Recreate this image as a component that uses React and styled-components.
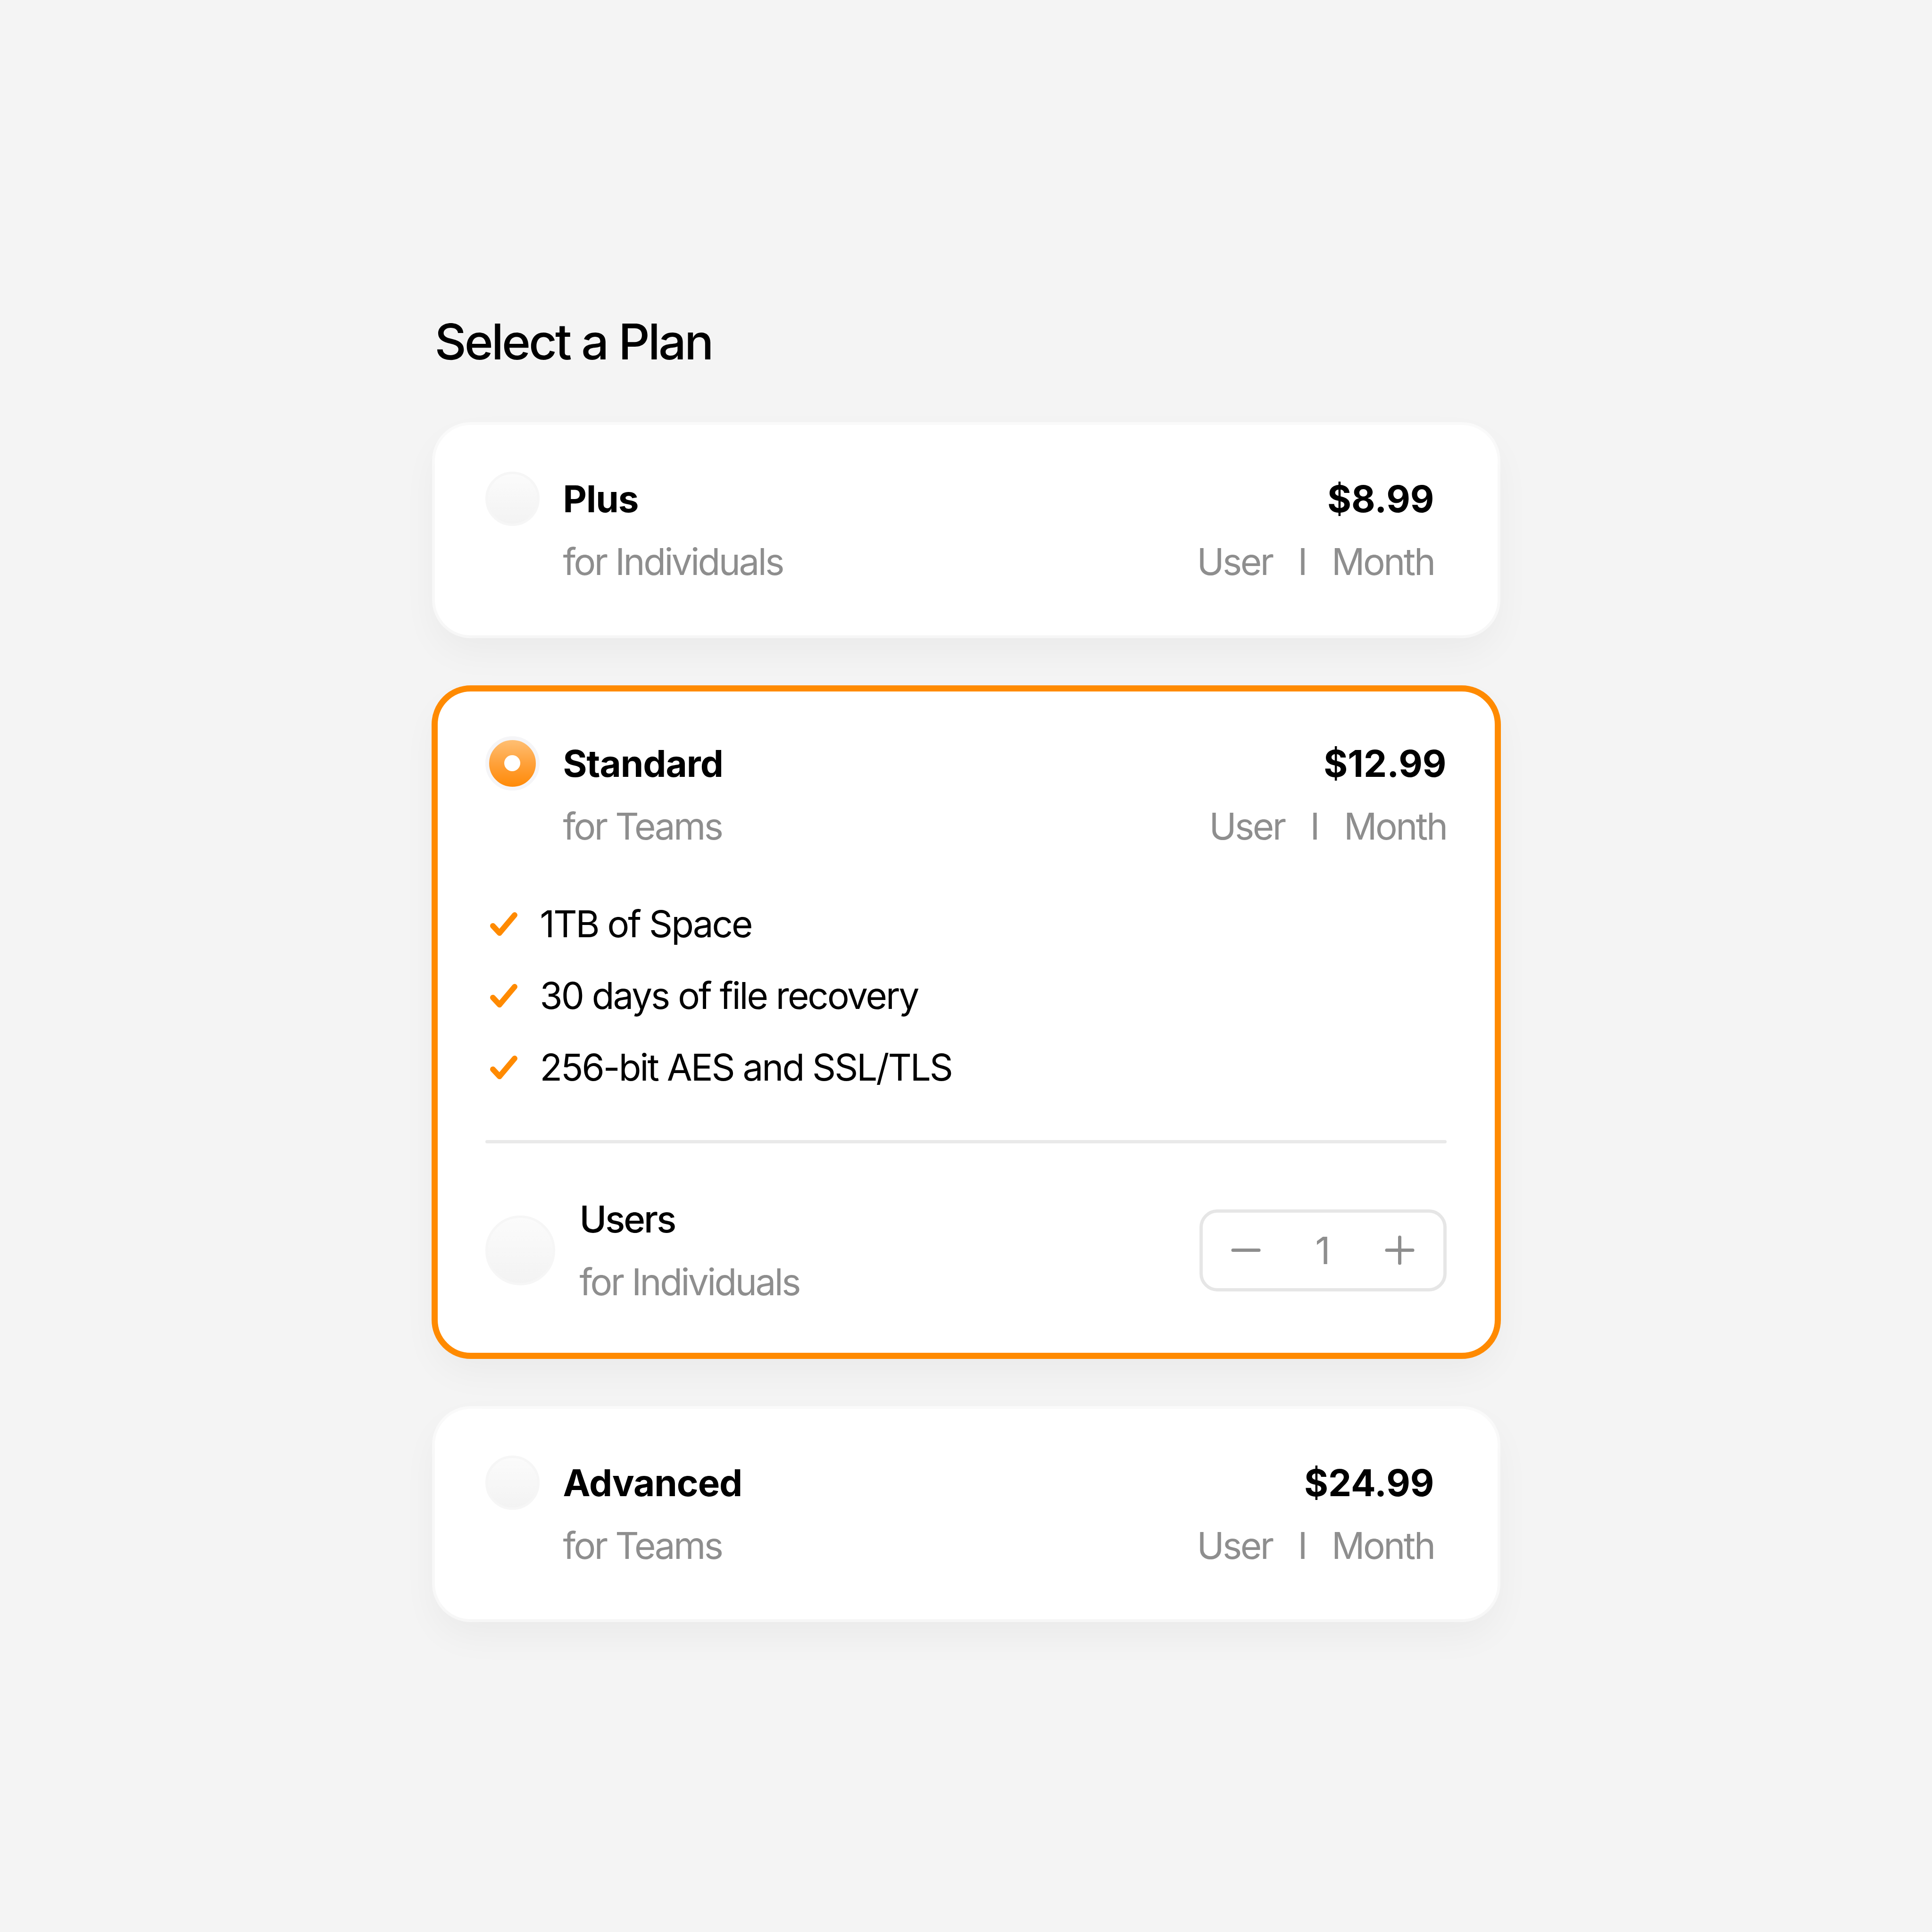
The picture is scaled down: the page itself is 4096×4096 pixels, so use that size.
import React, { useState } from "react";
import styled, { createGlobalStyle, css } from "styled-components";

const GlobalStyle = createGlobalStyle`
  html, body {
    margin: 0;
    padding: 0;
    background: #f4f4f4;
  }
  body {
    font-family: Inter, "Noto Sans", "Liberation Sans", sans-serif;
    color: #000;
  }
`;

const Page = styled.main`
  min-height: 4096px;
  box-sizing: border-box;
  padding-top: 662px;
`;

const Wrap = styled.section`
  width: 2253px;
  margin: 0 auto;
`;

const Title = styled.h1`
  margin: 0 0 114px;
  font-size: 104px;
  line-height: 1.2;
  font-weight: 500;
  letter-spacing: -4px;
`;

const Stack = styled.div`
  display: flex;
  flex-direction: column;
  gap: 113px;
`;

const Card = styled.div`
  box-sizing: border-box;
  width: 100%;
  background: #fff;
  border-radius: 76px;
  padding: ${(p) => (p.$selected ? "92px 108px 90px 107px" : "90px 134px 90px 107px")};
  box-shadow: 0 0 0 6px rgba(255, 255, 255, 0.55), 0 34px 80px rgba(0, 0, 0, 0.045);
  cursor: pointer;
  ${(p) =>
    p.$selected &&
    css`
      outline: 13px solid #ff8a00;
      outline-offset: -6px;
    `}
`;

const Header = styled.div`
  display: grid;
  grid-template-columns: 115px 1fr auto;
  column-gap: 50px;
  line-height: 133px;
  font-size: 78px;
`;

const Radio = styled.span`
  box-sizing: border-box;
  display: block;
  width: ${(p) => p.$size}px;
  height: ${(p) => p.$size}px;
  border-radius: 50%;
  align-self: center;
  border: ${(p) => (p.$selected ? "8px solid #f5f5f7" : "5px solid #f6f6f6")};
  background: ${(p) =>
    p.$selected
      ? "linear-gradient(180deg, #ffbf73 0%, #ffa13a 50%, #ff8a08 100%)"
      : "linear-gradient(180deg, #fbfbfb 0%, #f3f3f3 100%)"};
  position: relative;
  flex: none;

  ${(p) =>
    p.$selected &&
    css`
      &::after {
        content: "";
        position: absolute;
        left: 50%;
        top: 50%;
        width: 34px;
        height: 34px;
        margin: -17px 0 0 -17px;
        border-radius: 50%;
        background: #fff;
      }
    `}
`;

const Name = styled.span`
  font-weight: 700;
  letter-spacing: -1px;
`;

const Price = styled.span`
  font-weight: 700;
  text-align: right;
`;

const Sub = styled.span`
  grid-column: 2;
  color: #8e8e8e;
  font-weight: 400;
  letter-spacing: -3.5px;
`;

const Per = styled.span`
  display: flex;
  justify-content: flex-end;
  gap: 54px;
  color: #8e8e8e;
  font-weight: 400;
  letter-spacing: -3.5px;
`;

const Features = styled.ul`
  list-style: none;
  margin: 65px 0 0;
  padding: 0;
`;

const Feature = styled.li`
  display: flex;
  align-items: center;
  gap: 46px;
  padding-left: 8px;
  height: 152px;
  font-size: 78px;
  font-weight: 400;
  letter-spacing: -3px;
`;

const Divider = styled.hr`
  border: 0;
  height: 7px;
  margin: 78px 0 0;
  background: #e9e9e9;
  border-radius: 4px;
`;

const UsersRow = styled.div`
  display: flex;
  align-items: center;
  margin-top: 94px;
`;

const UsersText = styled.div`
  display: flex;
  flex-direction: column;
  margin-left: 52px;
  flex: 1;
  font-size: 78px;
  line-height: 133px;
`;

const UsersLabel = styled.span`
  font-weight: 500;
  letter-spacing: -3px;
`;

const Stepper = styled.div`
  box-sizing: border-box;
  width: 524px;
  height: 174px;
  border: 7px solid #e6e6e6;
  border-radius: 38px;
  display: flex;
  align-items: center;
  justify-content: space-between;
  padding: 0 60px;
`;

const StepButton = styled.button`
  border: 0;
  background: none;
  padding: 0;
  width: 63px;
  height: 63px;
  display: flex;
  cursor: pointer;
  color: #8e8e8e;
`;

const Count = styled.span`
  font-size: 80px;
  font-weight: 400;
  color: #8e8e8e;
`;

const Check = () => (
  <svg width="62" height="56" viewBox="0 0 62 56" fill="none">
    <polyline
      points="8,32 22,47 54,9"
      stroke="#ff8a00"
      strokeWidth="12"
      strokeLinecap="round"
      strokeLinejoin="round"
    />
  </svg>
);

const Minus = () => (
  <svg width="63" height="63" viewBox="0 0 63 63">
    <line x1="4" y1="31.5" x2="59" y2="31.5" stroke="currentColor" strokeWidth="7" strokeLinecap="round" />
  </svg>
);

const Plus = () => (
  <svg width="63" height="63" viewBox="0 0 63 63">
    <line x1="4" y1="31.5" x2="59" y2="31.5" stroke="currentColor" strokeWidth="7" strokeLinecap="round" />
    <line x1="31.5" y1="4" x2="31.5" y2="59" stroke="currentColor" strokeWidth="7" strokeLinecap="round" />
  </svg>
);

const plans = [
  { id: "plus", name: "Plus", sub: "for Individuals", price: "$8.99" },
  {
    id: "standard",
    name: "Standard",
    sub: "for Teams",
    price: "$12.99",
    features: ["1TB of Space", "30 days of file recovery", "256-bit AES and SSL/TLS"],
  },
  { id: "advanced", name: "Advanced", sub: "for Teams", price: "$24.99" },
];

export default function App() {
  const [selected, setSelected] = useState("standard");
  const [users, setUsers] = useState(1);

  return (
    <>
      <GlobalStyle />
      <Page>
        <Wrap>
          <Title>Select a Plan</Title>
          <Stack>
            {plans.map((plan) => {
              const active = plan.id === selected;
              return (
                <Card key={plan.id} $selected={active} onClick={() => setSelected(plan.id)}>
                  <Header>
                    <Radio $size={115} $selected={active} />
                    <Name>{plan.name}</Name>
                    <Price>{plan.price}</Price>
                    <Sub>{plan.sub}</Sub>
                    <Per>
                      <span>User</span>
                      <span>I</span>
                      <span>Month</span>
                    </Per>
                  </Header>

                  {active && plan.features && (
                    <>
                      <Features>
                        {plan.features.map((f) => (
                          <Feature key={f}>
                            <Check />
                            {f}
                          </Feature>
                        ))}
                      </Features>
                      <Divider />
                      <UsersRow>
                        <Radio $size={148} />
                        <UsersText>
                          <UsersLabel>Users</UsersLabel>
                          <Sub>for Individuals</Sub>
                        </UsersText>
                        <Stepper onClick={(e) => e.stopPropagation()}>
                          <StepButton onClick={() => setUsers(Math.max(1, users - 1))}>
                            <Minus />
                          </StepButton>
                          <Count>{users}</Count>
                          <StepButton onClick={() => setUsers(users + 1)}>
                            <Plus />
                          </StepButton>
                        </Stepper>
                      </UsersRow>
                    </>
                  )}
                </Card>
              );
            })}
          </Stack>
        </Wrap>
      </Page>
    </>
  );
}
